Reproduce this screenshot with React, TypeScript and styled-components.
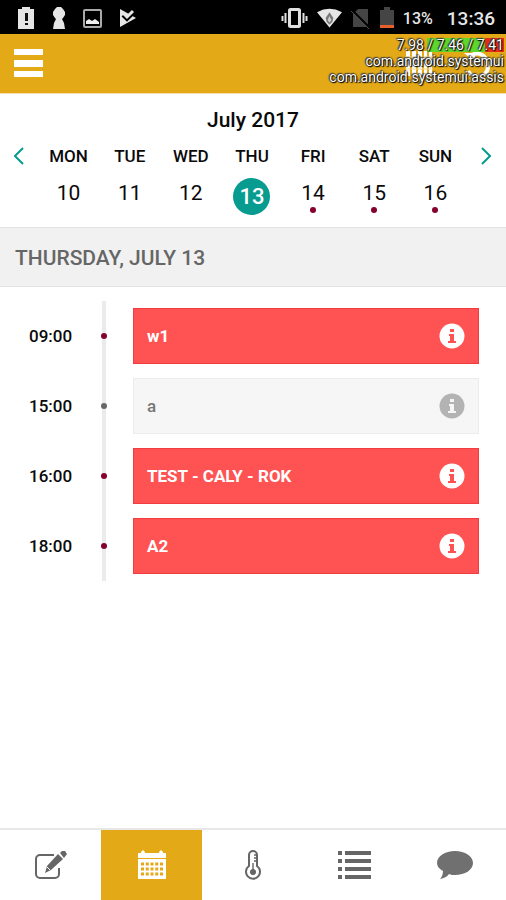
import React from "react";
import styled, { createGlobalStyle } from "styled-components";

const colors = {
  gold: "#e3a917",
  teal: "#079c8f",
  red: "#ff5252",
  wine: "#85002f",
  grey: "#666666",
  line: "#e3e3e3",
};

const GlobalStyle = createGlobalStyle`
  *, *::before, *::after { box-sizing: border-box; }
  body {
    margin: 0;
    background: #fff;
    color: #0a0a0a;
    font-family: Roboto, "Liberation Sans", sans-serif;
  }
  button { font: inherit; color: inherit; border: 0; padding: 0; background: none; cursor: pointer; }
  a { color: inherit; text-decoration: none; }
  svg { display: block; flex: none; }
  h1, h2, ul, p { margin: 0; padding: 0; }
  ul { list-style: none; }
`;

const Screen = styled.div`
  display: flex;
  flex-direction: column;
  min-height: 100vh;
`;

const StatusBar = styled.div`
  display: flex;
  align-items: center;
  justify-content: space-between;
  height: 34px;
  padding: 2px 11px 0 17px;
  background: #000;
  color: #e6e6e6;
`;

const StatusGroup = styled.div<{ $gap: number }>`
  display: flex;
  align-items: center;
  gap: ${(p) => p.$gap}px;
`;

const BatteryLevel = styled.span`
  font-size: 16px;
  font-weight: 500;
`;

const Clock = styled.time`
  margin-left: 5px;
  font-size: 19px;
  font-weight: 500;
`;

const Header = styled.header`
  position: relative;
  display: flex;
  align-items: center;
  justify-content: space-between;
  height: 60px;
  padding: 0 15px 0 14px;
  background: ${colors.gold};
  border-bottom: 1px solid #f6dfae;
  color: #fff;
`;

const HeaderActions = styled.div`
  display: flex;
  align-items: center;
  gap: 30px;
`;

const Overlay = styled.div`
  position: absolute;
  top: 3px;
  right: 2px;
  font-size: 14px;
  line-height: 16px;
  text-align: right;
  color: #fff;
  text-shadow: 0 0 1px #000, 0 0 2px #000, 1px 1px 1px #000, -1px -1px 1px #555;
  pointer-events: none;
`;

const LoadValues = styled.p`
  display: flex;
  justify-content: flex-end;
  align-items: center;
  height: 16px;
  white-space: pre;
`;

const Load = styled.span<{ $color: string }>`
  height: 14px;
  line-height: 14px;
  background: ${(p) => p.$color};
`;

const Calendar = styled.section`
  padding: 12px 0;
  text-align: center;
`;

const Month = styled.h1`
  font-size: 21px;
  line-height: 28px;
  font-weight: 500;
`;

const Week = styled.div`
  display: grid;
  grid-template-columns: 38px repeat(7, 1fr) 40px;
  margin-top: 11px;
`;

const WeekArrow = styled.button`
  display: flex;
  justify-content: center;
  align-items: center;
  height: 22px;
  color: ${colors.teal};
`;

const Day = styled.button`
  display: flex;
  flex-direction: column;
  align-items: center;
`;

const DayName = styled.span`
  font-size: 17px;
  line-height: 22px;
  font-weight: 500;
`;

const DayNumber = styled.span<{ $selected: boolean }>`
  width: 37px;
  height: 37px;
  margin-top: 11px;
  border-radius: 50%;
  font-size: ${(p) => (p.$selected ? 22 : 21)}px;
  line-height: ${(p) => (p.$selected ? 37 : 31)}px;
  font-weight: ${(p) => (p.$selected ? 500 : 400)};
  background: ${(p) => (p.$selected ? colors.teal : "transparent")};
  color: ${(p) => (p.$selected ? "#fff" : "inherit")};
`;

const Dot = styled.span<{ $color: string }>`
  flex: none;
  width: 6px;
  height: 6px;
  border-radius: 50%;
  background: ${(p) => p.$color};
`;

const DayDot = styled(Dot)`
  margin-top: -8px;
`;

const DateBand = styled.h2`
  height: 60px;
  padding-left: 15px;
  border-top: 1px solid ${colors.line};
  border-bottom: 1px solid ${colors.line};
  background: #f1f1f1;
  color: ${colors.grey};
  font-size: 21px;
  line-height: 60px;
  font-weight: 500;
`;

const Timeline = styled.ul`
  flex: 1;
  padding: 14px 27px 14px 0;
`;

const Slot = styled.li`
  display: grid;
  grid-template-columns: 102px 4px 1fr;
  align-items: center;
  height: 70px;
`;

const SlotTime = styled.time`
  padding-left: 29px;
  font-size: 17px;
  font-weight: 500;
`;

const Rail = styled.span`
  display: flex;
  align-items: center;
  justify-content: center;
  height: 100%;
  background: #ebebeb;
`;

const EventCard = styled.button<{ $busy: boolean }>`
  display: flex;
  align-items: center;
  justify-content: space-between;
  height: 56px;
  margin-left: 27px;
  padding: 0 13px;
  border: 1px solid ${(p) => (p.$busy ? "#f23c3f" : "#ececec")};
  background: ${(p) => (p.$busy ? colors.red : "#f6f6f6")};
  color: ${(p) => (p.$busy ? "#fff" : "#777")};
  font-size: 17px;
  font-weight: ${(p) => (p.$busy ? 700 : 500)};
`;

const TabBar = styled.nav`
  display: grid;
  grid-template-columns: repeat(5, 1fr);
  height: 72px;
  border-top: 2px solid #e8e8e8;
`;

const Tab = styled.a<{ $active: boolean }>`
  display: flex;
  align-items: center;
  justify-content: center;
  background: ${(p) => (p.$active ? colors.gold : "#fff")};
  color: ${(p) => (p.$active ? "#fff" : colors.grey)};
`;

const BatteryAlertIcon = () => (
  <svg width="18" height="24" viewBox="0 0 18 24" aria-hidden="true">
    <path d="M1 3h4V1h8v2h4v20H1z" fill="#e6e6e6" />
    <path d="M8 7h3v8H8zM8 17h3v2H8z" fill="#111" />
  </svg>
);

const KeyholeIcon = () => (
  <svg width="14" height="24" viewBox="0 0 14 24" aria-hidden="true">
    <path d="M5 1h4l2 2 2 3v3l-2 3-1 1 2 4 1 6H1l1-6 2-4-1-1-2-3V6l2-3z" fill="#e6e6e6" />
  </svg>
);

const PictureIcon = () => (
  <svg width="19" height="19" viewBox="0 0 19 19" aria-hidden="true">
    <rect x="1" y="1" width="17" height="17" rx="1" fill="none" stroke="#aaa" strokeWidth="2" />
    <path d="M3 15v-3l3-2 3 2 3-2 4 3v2z" fill="#eee" />
  </svg>
);

const PlayCheckIcon = () => (
  <svg width="18" height="20" viewBox="0 0 18 20" aria-hidden="true">
    <path d="M1 1l16 9L1 19z" fill="#e6e6e6" />
    <path d="M4 7l4 4 8-8" fill="none" stroke="#000" strokeWidth="4" />
    <path d="M4 5l4 4 6-6" fill="none" stroke="#e6e6e6" strokeWidth="3" />
  </svg>
);

const VibrateIcon = () => (
  <svg width="27" height="20" viewBox="0 0 27 20" fill="none" stroke="#e0e0e0" aria-hidden="true">
    <rect x="8.5" y="1.5" width="10" height="17" rx="1" strokeWidth="3" />
    <path d="M1.5 8v5M4.5 5v10M22.5 5v10M25.5 8v5" strokeWidth="2" />
  </svg>
);

const WifiIcon = () => (
  <svg width="25" height="20" viewBox="0 0 26 20" aria-hidden="true">
    <path d="M0 4Q13-3 26 4L13 20z" fill="#e6e6e6" />
    <path d="M13 4l4 6-1 4-3 3-3-3-1-4z" fill="#777" />
    <path d="M13 8l2 4-2 3-2-3z" fill="#ccc" />
  </svg>
);

const NoSimIcon = () => (
  <svg width="20" height="21" viewBox="0 0 20 21" aria-hidden="true">
    <path d="M2 6l5-5h10v18H2z" fill="#454545" />
    <path d="M0 3l18 18" stroke="#555" strokeWidth="1" />
    <path d="M1 2l18 18" stroke="#000" strokeWidth="2" />
  </svg>
);

const BatteryIcon = () => (
  <svg width="14" height="22" viewBox="0 0 14 22" aria-hidden="true">
    <path d="M0 3h4V0h6v3h4v15H0z" fill="#454545" />
    <path d="M0 18h14v3H0z" fill="#e5602b" />
  </svg>
);

const MenuIcon = () => (
  <svg width="29" height="29" viewBox="0 0 29 29" fill="#fff" aria-hidden="true">
    <path d="M0 0h29v6H0zM0 11h29v7H0zM0 22h29v6H0z" />
  </svg>
);

const GridIcon = () => (
  <svg width="28" height="25" viewBox="0 0 28 25" aria-hidden="true">
    <path d="M1 0h4v25H1zM7 0h4v25H7zM13 0h4v25h-4zM19 0h3v25h-3zM24 0h3v25h-3z" fill="#fff" />
    <path d="M0 6h28M0 12h28M0 18h28" stroke="#f0d48b" strokeWidth="1" />
  </svg>
);

const RefreshIcon = () => (
  <svg width="28" height="25" viewBox="0 0 28 25" fill="none" stroke="#fff" strokeWidth="4" aria-hidden="true">
    <path d="M5 20a10 9 0 0 0 19-7A10 10 0 0 0 9 4" />
    <path d="M1 2h11v9z" fill="#fff" stroke="none" />
  </svg>
);

const Chevron = ({ flip }: { flip?: boolean }) => (
  <svg width="10" height="18" viewBox="0 0 10 18" fill="none" stroke="currentColor" strokeWidth="2" aria-hidden="true">
    <path d={flip ? "M1 1l8 8-8 8" : "M9 1L1 9l8 8"} />
  </svg>
);

const InfoIcon = ({ busy }: { busy: boolean }) => (
  <svg width="26" height="26" viewBox="0 0 26 26" aria-hidden="true">
    <circle cx="13" cy="13" r="12.5" fill={busy ? "#fff" : "#b3b3b3"} />
    <path
      d="M11 6h4v3h-4zM10 11h5v7h2v2H9v-2h2v-5h-1z"
      fill={busy ? colors.red : "#f6f6f6"}
    />
  </svg>
);

const EditIcon = () => (
  <svg width="34" height="30" viewBox="0 0 34 30" aria-hidden="true">
    <path
      d="M20 5H6a4 4 0 0 0-4 4v15a4 4 0 0 0 4 4h15a4 4 0 0 0 4-4v-6"
      fill="none"
      stroke="currentColor"
      strokeWidth="2"
    />
    <path d="M24 4l5 5-12 11-6 3 2-7z" fill="currentColor" />
    <path d="M26 3l2-2h3l2 3-3 4z" fill="currentColor" />
    <path d="M13 17l3 3" stroke="#fff" strokeWidth="1" />
  </svg>
);

const CalendarIcon = () => (
  <svg width="28" height="30" viewBox="0 0 28 30" aria-hidden="true">
    <path d="M0 3h3V2l2-2 2 2v1h14V2l2-2 2 2v1h3v5H0zM0 9h28v20H0z" fill="#fff" />
    {[14, 19, 24].map((y) => (
      <path key={y} d={`M3 ${y}h22`} stroke={colors.gold} strokeWidth="3" strokeDasharray="3 1.75" />
    ))}
  </svg>
);

const ThermometerIcon = () => (
  <svg width="16" height="30" viewBox="0 0 16 30" fill="none" stroke="currentColor" aria-hidden="true">
    <path d="M4 16V5a4 4 0 0 1 8 0v11a7 7 0 1 1-8 0z" strokeWidth="2" />
    <path d="M8 13v8M9 5h3M9 8h3M9 11h3" strokeWidth="1.4" />
    <circle cx="8" cy="22" r="2.6" fill="currentColor" />
  </svg>
);

const ListIcon = () => (
  <svg width="34" height="30" viewBox="0 0 34 30" fill="currentColor" aria-hidden="true">
    {[1, 9, 17, 25].map((y) => (
      <path key={y} d={`M1 ${y}h4v4h-4zM8 ${y}h26v4h-26z`} />
    ))}
  </svg>
);

const ChatIcon = () => (
  <svg width="36" height="30" viewBox="0 0 36 30" fill="#707070" aria-hidden="true">
    <path d="M18 1c10 0 18 5 18 12s-8 12-18 12c-2 0-4 0-6-1-2 3-5 4-9 5 2-2 3-5 3-8-4-2-6-5-6-8C0 6 8 1 18 1z" />
  </svg>
);

const days = [
  { name: "MON", number: 10 },
  { name: "TUE", number: 11 },
  { name: "WED", number: 12 },
  { name: "THU", number: 13, selected: true },
  { name: "FRI", number: 14, marked: true },
  { name: "SAT", number: 15, marked: true },
  { name: "SUN", number: 16, marked: true },
];

const events = [
  { time: "09:00", title: "w1", busy: true },
  { time: "15:00", title: "a", busy: false },
  { time: "16:00", title: "TEST - CALY - ROK", busy: true },
  { time: "18:00", title: "A2", busy: true },
];

const tabs = [
  { label: "Notes", Icon: EditIcon },
  { label: "Calendar", Icon: CalendarIcon, active: true },
  { label: "Temperature", Icon: ThermometerIcon },
  { label: "List", Icon: ListIcon },
  { label: "Messages", Icon: ChatIcon },
];

export default function App() {
  return (
    <Screen>
      <GlobalStyle />
      <StatusBar>
        <StatusGroup $gap={17}>
          <BatteryAlertIcon />
          <KeyholeIcon />
          <PictureIcon />
          <PlayCheckIcon />
        </StatusGroup>
        <StatusGroup $gap={9}>
          <VibrateIcon />
          <WifiIcon />
          <NoSimIcon />
          <BatteryIcon />
          <BatteryLevel>13%</BatteryLevel>
          <Clock>13:36</Clock>
        </StatusGroup>
      </StatusBar>
      <Header>
        <button type="button" aria-label="Menu">
          <MenuIcon />
        </button>
        <HeaderActions>
          <button type="button" aria-label="Month view">
            <GridIcon />
          </button>
          <button type="button" aria-label="Refresh">
            <RefreshIcon />
          </button>
        </HeaderActions>
        <Overlay>
          <LoadValues>
            <span>7.98 </span>
            <Load $color="#5fd62b">/ 7.46 / 7</Load>
            <Load $color="#ea2a18">.41</Load>
          </LoadValues>
          <p>com.android.systemui</p>
          <p>com.android.systemui:assis</p>
        </Overlay>
      </Header>
      <Calendar>
        <Month>July 2017</Month>
        <Week>
          <WeekArrow type="button" aria-label="Previous week">
            <Chevron />
          </WeekArrow>
          {days.map((day) => (
            <Day type="button" key={day.number}>
              <DayName>{day.name}</DayName>
              <DayNumber $selected={!!day.selected}>{day.number}</DayNumber>
              {day.marked && <DayDot $color={colors.wine} />}
            </Day>
          ))}
          <WeekArrow type="button" aria-label="Next week">
            <Chevron flip />
          </WeekArrow>
        </Week>
      </Calendar>
      <DateBand>THURSDAY, JULY 13</DateBand>
      <Timeline>
        {events.map((event) => (
          <Slot key={event.time}>
            <SlotTime>{event.time}</SlotTime>
            <Rail>
              <Dot $color={event.busy ? colors.wine : colors.grey} />
            </Rail>
            <EventCard type="button" $busy={event.busy}>
              <span>{event.title}</span>
              <InfoIcon busy={event.busy} />
            </EventCard>
          </Slot>
        ))}
      </Timeline>
      <TabBar>
        {tabs.map(({ label, Icon, active }) => (
          <Tab key={label} href={`#${label.toLowerCase()}`} aria-label={label} $active={!!active}>
            <Icon />
          </Tab>
        ))}
      </TabBar>
    </Screen>
  );
}
